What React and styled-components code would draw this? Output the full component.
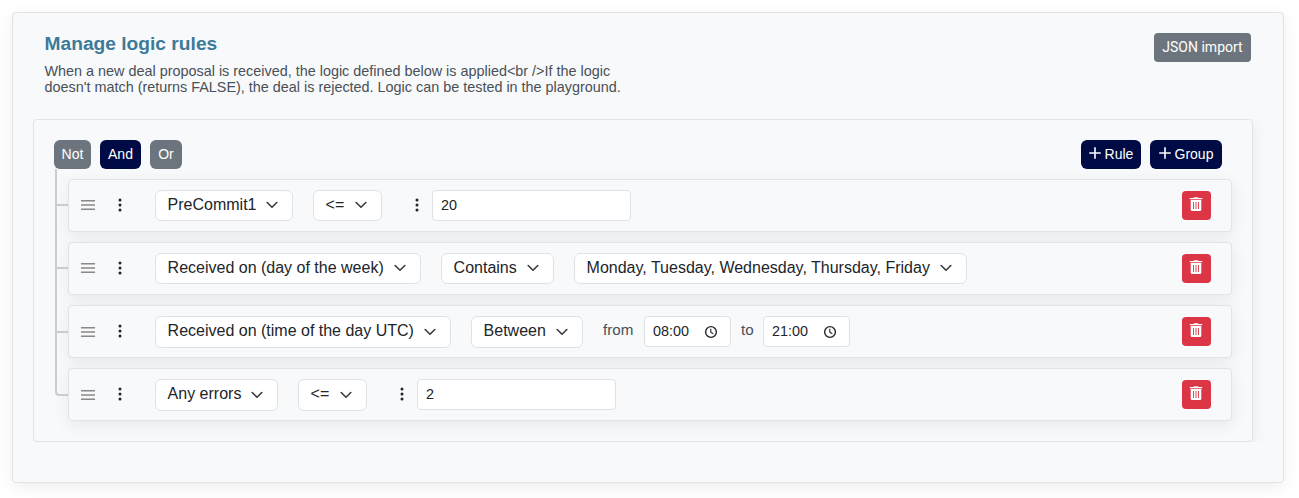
import React from "react";
import styled, { createGlobalStyle } from "styled-components";
import { BsThreeDotsVertical } from "react-icons/bs";

const GlobalStyle = createGlobalStyle`
  *, *::before, *::after { box-sizing: border-box; }
  body {
    margin: 0;
    background: #fff;
    color: #212529;
    font-family: "Liberation Sans", Arial, sans-serif;
    overflow: hidden;
  }
  svg { display: block; flex: none; }
`;

const Page = styled.main`
  padding: 12px 15px 15px 12px;
`;

const Panel = styled.section`
  height: 471px;
  padding: 20px 0 0 20px;
  background: #f8f9fb;
  border: 1px solid #e1e3e5;
  border-radius: 4px;
  box-shadow: 0 4px 16px rgba(0, 0, 0, 0.07);
`;

const PanelHeader = styled.header`
  display: flex;
  justify-content: space-between;
  align-items: flex-start;
  height: 86px;
  padding: 0 32px 0 11.5px;
`;

const Title = styled.h1`
  margin: 0;
  font-size: 19.2px;
  line-height: 22px;
  font-weight: 700;
  color: #3c7a99;
`;

const Description = styled.p`
  width: 590px;
  margin: 8px 0 0;
  font-size: 14.4px;
  line-height: 16px;
  color: #495057;
`;

const Button = styled.button`
  display: flex;
  align-items: center;
  justify-content: center;
  gap: 4px;
  width: ${(p) => p.$width}px;
  height: 29px;
  padding: 0;
  border: 0;
  border-radius: ${(p) => p.$radius || 6}px;
  background: ${(p) => (p.$primary ? "#000b45" : "#6c757d")};
  color: #fff;
  font-family: ${(p) => (p.$roboto ? "Roboto, sans-serif" : "inherit")};
  font-size: 14px;
  line-height: 21px;
  white-space: nowrap;
`;

const ButtonRow = styled.div`
  display: flex;
  gap: 9px;
`;

const GroupClip = styled.div`
  overflow: hidden;
  height: 323px;
`;

const Group = styled.div`
  width: 1220px;
  height: 323px;
  padding: 20px;
  border: 1px solid #e1e3e5;
  border-radius: 4px;
  box-shadow: 0 4px 16px rgba(0, 0, 0, 0.07);
`;

const GroupHeader = styled.div`
  display: flex;
  justify-content: space-between;
  padding-right: 10px;
`;

const RuleList = styled.ul`
  display: flex;
  flex-direction: column;
  gap: 10px;
  margin: 0;
  padding: 10px 0 0 14px;
  list-style: none;
`;

const RuleItem = styled.li`
  position: relative;
  display: flex;
  align-items: center;
  width: 1164px;
  height: 53px;
  padding: 0 20px 0 12px;
  background: #f8f9fb;
  border: 1px solid #e1e3e5;
  border-radius: 4px;
  box-shadow: 0 4px 16px rgba(0, 0, 0, 0.07);

  &::before {
    content: "";
    position: absolute;
    left: -14px;
    top: ${(p) => (p.$first ? -11 : -38)}px;
    width: 13px;
    height: ${(p) => (p.$first ? 37 : 64) + (p.$low ? 1 : 0)}px;
    border: solid #ccc;
    border-width: 0 0 2px 2px;
    border-radius: 0 0 0 ${(p) => (p.$last ? 4 : 0)}px;
  }
`;

const Handle = styled.span`
  width: 14px;
  margin: ${(p) => (p.$low ? "1px 17px 0 0" : "0 17px 1px 0")};
`;

const Menu = styled.span`
  display: flex;
  width: 16px;
  margin: 0 ${(p) => p.$after}px 2px ${(p) => p.$before || 0}px;
`;

const Controls = styled.div`
  display: flex;
  align-items: center;
  flex: 1;
`;

const Select = styled.button`
  display: flex;
  align-items: center;
  justify-content: space-between;
  width: ${(p) => p.$width}px;
  height: ${(p) => (p.$low ? 32 : 31)}px;
  margin: 0 20px ${(p) => (p.$low ? -1 : 0)}px 0;
  padding: ${(p) => (p.$low ? "0 14.5px 0 11.6px" : "0 14.5px 1px 11.6px")};
  border: 1px solid #dee2e6;
  border-radius: 6px;
  background: #fff;
  color: #212529;
  font-family: inherit;
  font-size: 16px;
  line-height: 24px;
  white-space: nowrap;
`;

const SelectLabel = styled.span`
  align-self: flex-start;
  margin-top: 2px;
`;

const Field = styled.div`
  display: flex;
  align-items: center;
  justify-content: space-between;
  width: ${(p) => p.$width}px;
  height: 31px;
  padding: 0 12px 0 8px;
  border: 1px solid #dee2e6;
  border-radius: 4px;
  background: #fff;
  font-size: 14.4px;
`;

const FieldText = styled.span`
  padding-bottom: 2px;
`;

const RangeLabel = styled.span`
  width: ${(p) => p.$width}px;
  margin-right: 10px;
  margin-left: ${(p) => p.$before || 0}px;
  padding-bottom: 5px;
  font-size: 15.2px;
  color: #495057;
`;

const DeleteButton = styled.button`
  display: flex;
  justify-content: center;
  width: 29px;
  height: 29px;
  padding: 6px 1px 0 0;
  border: 0;
  border-radius: 4px;
  background: #dc3545;
  color: #fff;
`;

function Clock() {
  return (
    <svg width="14" height="14" viewBox="0 0 14 14" fill="none" stroke="#212529">
      <circle cx="7" cy="7" r="5.4" strokeWidth="1.4" />
      <path d="M6.8 3.8V7.2L9.3 8.7" strokeWidth="1.1" />
    </svg>
  );
}

function Plus() {
  return (
    <svg width="12" height="15" viewBox="0 0 12 15" stroke="currentColor" strokeWidth="1.6" strokeLinecap="round">
      <path d="M.8 6h10.4M6 .8v10.4" />
    </svg>
  );
}

function Chevron() {
  return (
    <svg width="12" height="8" viewBox="0 0 12 8" fill="none" stroke="#343a40" strokeWidth="1.6" strokeLinecap="round" strokeLinejoin="round">
      <path d="M1.2 1.5L6 6.2L10.8 1.5" />
    </svg>
  );
}

function Bars() {
  return (
    <svg width="14" height="10" viewBox="0 0 14 10" stroke="#888" strokeWidth="1.5">
      <path d="M0 .75h14M0 5h14M0 9.25h14" />
    </svg>
  );
}

function Trash() {
  return (
    <svg width="14" height="15" viewBox="0 0 14 15" fill="currentColor">
      <path d="M4.5 .9Q4.7.3 5.2.3h3.6q.5 0 .7.6h3.3q.5 0 .5.5v.9H.7v-.9q0-.5.5-.5z" />
      <path fillRule="evenodd" d="M1.7 2.9h10.6v9.8q0 1.3-1.3 1.3H3q-1.3 0-1.3-1.3zM4 5v7h.9V5zM6.55 5v7h.9V5zM9.1 5v7h.9V5z" />
    </svg>
  );
}

function Dropdown({ label, width, low }) {
  return (
    <Select $width={width} $low={low}>
      <SelectLabel>{label}</SelectLabel>
      <Chevron />
    </Select>
  );
}

function NumberValue({ value }) {
  return (
    <>
      <Menu $before={7} $after={7}>
        <BsThreeDotsVertical size={16} />
      </Menu>
      <Field $width={199}>
        <FieldText>{value}</FieldText>
      </Field>
    </>
  );
}

function TimeField({ value }) {
  return (
    <Field $width={87}>
      <FieldText>{value}</FieldText>
      <Clock />
    </Field>
  );
}

function TimeRange({ from, to }) {
  return (
    <>
      <RangeLabel $width={31}>from</RangeLabel>
      <TimeField value={from} />
      <RangeLabel $width={12} $before={10}>to</RangeLabel>
      <TimeField value={to} />
    </>
  );
}

function Rule({ first, last, low, children }) {
  return (
    <RuleItem $first={first} $last={last} $low={low}>
      <Handle $low={low}>
        <Bars />
      </Handle>
      <Menu $after={27}>
        <BsThreeDotsVertical size={16} />
      </Menu>
      <Controls>{children}</Controls>
      <DeleteButton aria-label="Delete rule">
        <Trash />
      </DeleteButton>
    </RuleItem>
  );
}

export default function App() {
  return (
    <Page>
      <GlobalStyle />
      <Panel>
        <PanelHeader>
          <div>
            <Title>Manage logic rules</Title>
            <Description>
              {"When a new deal proposal is received, the logic defined below is applied<br />If the logic doesn't match (returns FALSE), the deal is rejected. Logic can be tested in the playground."}
            </Description>
          </div>
          <Button $roboto $radius={4} $width={97}>JSON import</Button>
        </PanelHeader>
        <GroupClip>
          <Group>
            <GroupHeader>
              <ButtonRow>
                <Button $width={37}>Not</Button>
                <Button $primary $width={41}>And</Button>
                <Button $width={32}>Or</Button>
              </ButtonRow>
              <ButtonRow>
                <Button $primary $width={60}><Plus />Rule</Button>
                <Button $primary $width={72}><Plus />Group</Button>
              </ButtonRow>
            </GroupHeader>
            <RuleList>
              <Rule first>
                <Dropdown label="PreCommit1" width={138} />
                <Dropdown label="<=" width={69} />
                <NumberValue value="20" />
              </Rule>
              <Rule>
                <Dropdown label="Received on (day of the week)" width={266} />
                <Dropdown label="Contains" width={113} />
                <Dropdown label="Monday, Tuesday, Wednesday, Thursday, Friday" width={393} />
              </Rule>
              <Rule low>
                <Dropdown low label="Received on (time of the day UTC)" width={296} />
                <Dropdown low label="Between" width={112} />
                <TimeRange from="08:00" to="21:00" />
              </Rule>
              <Rule last low>
                <Dropdown low label="Any errors" width={123} />
                <Dropdown low label="<=" width={69} />
                <NumberValue value="2" />
              </Rule>
            </RuleList>
          </Group>
        </GroupClip>
      </Panel>
    </Page>
  );
}
